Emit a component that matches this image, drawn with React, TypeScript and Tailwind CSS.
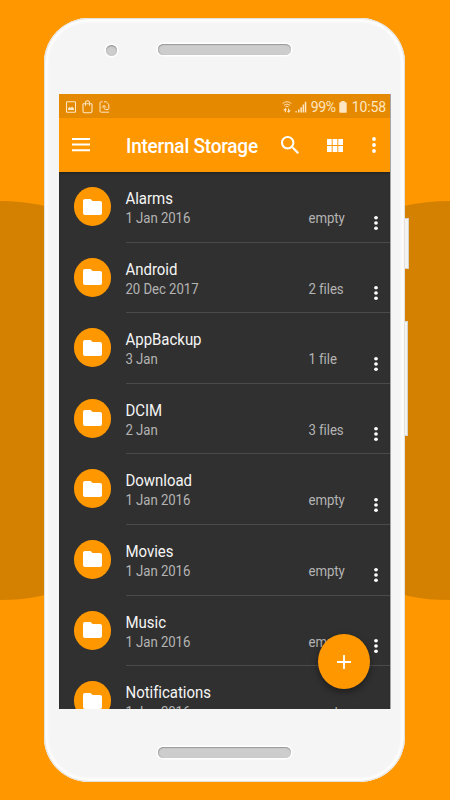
import React from 'react';

interface Folder {
  name: string;
  date: string;
  info: string;
}

const folders: Folder[] = [
  { name: 'Alarms', date: '1 Jan 2016', info: 'empty' },
  { name: 'Android', date: '20 Dec 2017', info: '2 files' },
  { name: 'AppBackup', date: '3 Jan', info: '1 file' },
  { name: 'DCIM', date: '2 Jan', info: '3 files' },
  { name: 'Download', date: '1 Jan 2016', info: 'empty' },
  { name: 'Movies', date: '1 Jan 2016', info: 'empty' },
  { name: 'Music', date: '1 Jan 2016', info: 'empty' },
  { name: 'Notifications', date: '1 Jan 2016', info: 'empty' },
];

const Dots: React.FC<{ className: string }> = ({ className }) => (
  <svg viewBox="0 0 4 16" className={className} fill="#fff" preserveAspectRatio="none">
    <circle cx="2" cy="2" r="1.9" />
    <circle cx="2" cy="8" r="1.9" />
    <circle cx="2" cy="14" r="1.9" />
  </svg>
);

const StatusBar = () => (
  <div className="flex h-[24px] shrink-0 items-center bg-[#e58900] pt-px pl-[7px] pr-1 text-[#ffe6c2]">
    <svg width="10" height="12" viewBox="0 0 10 12" fill="none" stroke="currentColor">
      <rect x="0.5" y="0.8" width="9" height="10.4" rx="0.6" strokeWidth="1.1" />
      <path d="M2 9V7.4l1.6-1.7 1.2 1.4L6 5.6 8 7.6V9z" fill="currentColor" stroke="none" />
    </svg>
    <svg width="11" height="14" viewBox="0 0 11 14" className="ml-1.5" fill="none" stroke="currentColor" strokeWidth="1.1">
      <path d="M3 3.8H1M4.2 3.8h2.6M8 3.8h2M1 3.8v7.4q0 1.6 1.6 1.6h5.8q1.6 0 1.6-1.6V3.8" />
      <path d="M3.5 5.8V2.8a2 2 0 0 1 4 0v3" />
    </svg>
    <svg width="11" height="12" viewBox="0 0 11 12" className="ml-1.5" fill="none" stroke="currentColor" strokeWidth="1">
      <path d="M3.6.8H2.1Q1 .8 1 1.9v8.2q0 1.1 1.1 1.1H10M5 .8h2.2l2.6 2.6v5" />
      <path d="M2.9 6.6l2.1-2.3 2 2.3M5 4.7v2.1q0 1.7 1.7 1.7h2.6" />
    </svg>
    <div className="flex-1" />
    <svg width="10" height="13" viewBox="0 0 10 13" fill="none" stroke="currentColor" strokeWidth="0.9">
      <path d="M.6 3.6q4.4-3.8 8.8 0M2 5.3q3-2.5 6 0M3.5 6.8q1.5-1.1 3 0" />
      <path d="M3.4 12.2V8.8M1.8 10.4l1.6-1.6 1 1M6.6 8.4V12M5.6 11l1 1 1.7-1.7" strokeWidth="1.1" />
    </svg>
    <svg width="12" height="12" viewBox="0 0 12 12" className="ml-[3px]" fill="currentColor">
      <path d="M.5 10h1.2v1.4H.5zM3 8.6h1.5v2.8H3zM5.4 6.2h1.5v5.2H5.4zM7.6 3.6h1.5v7.8H7.6zM9.8.8h1.5v10.6H9.8z" />
    </svg>
    <span className="ml-1 w-[27px] whitespace-nowrap text-[14px] leading-4 tracking-[-0.3px]">99%</span>
    <svg width="8" height="12" viewBox="0 0 8 12" className="ml-px" fill="currentColor">
      <path d="M2.3 0h3.4v1.3H7q.7 0 .7.7v9q0 .7-.7.7H1q-.7 0-.7-.7V2q0-.7.7-.7h1.3z" />
    </svg>
    <span className="ml-[5px] whitespace-nowrap text-[14px] leading-4 tracking-[-0.1px]">10:58</span>
  </div>
);

const Toolbar = () => (
  <div className="flex h-[54px] shrink-0 items-center bg-[#ff9800] pl-[13px] pr-[14px]">
    <svg width="18" height="14" viewBox="0 0 18 14" fill="#fff">
      <path d="M0 0h18v2H0zM0 5.6h18v2H0zM0 11.2h18v2H0z" />
    </svg>
    <h1 className="ml-[36px] w-[133px] scale-y-[1.06] whitespace-nowrap pt-[3px] text-[19px] font-medium leading-6 tracking-[-0.23px] text-white">
      Internal Storage
    </h1>
    <svg width="18" height="18" viewBox="3 3 17.49 17.49" className="ml-[21.5px]" fill="#fff">
      <path d="M15.5 14h-.79l-.28-.27C15.41 12.59 16 11.11 16 9.5 16 5.91 13.09 3 9.5 3S3 5.91 3 9.5 5.91 16 9.5 16c1.61 0 3.09-.59 4.23-1.57l.27.28v.79l5 4.99L20.49 19l-4.99-5zm-6 0C7.01 14 5 11.99 5 9.5S7.01 5 9.5 5 14 7.01 14 9.5 11.99 14 9.5 14z" />
    </svg>
    <svg width="16" height="13" viewBox="4 5 17 13" className="ml-[28.5px]" fill="#fff" preserveAspectRatio="none">
      <path d="M4 11h5V5H4v6zm0 7h5v-6H4v6zm6 0h5v-6h-5v6zm6 0h5v-6h-5v6zm-6-7h5V5h-5v6zm6-6v6h5V5h-5z" />
    </svg>
    <Dots className="ml-auto h-4 w-1" />
  </div>
);

const FolderRow: React.FC<{ folder: Folder }> = ({ folder }) => (
  <div className="flex h-[70.6px] shrink-0 pl-[14.5px]">
    <div className="mt-[15px] flex h-[39px] w-[37.5px] shrink-0 items-center justify-center rounded-[50%] bg-[#ff9800]">
      <svg width="19" height="16" viewBox="2 4 20 16" fill="#fff" preserveAspectRatio="none">
        <path d="M10 4H4c-1.1 0-1.99.9-1.99 2L2 18c0 1.1.9 2 2 2h16c1.1 0 2-.9 2-2V8c0-1.1-.9-2-2-2h-8l-2-2z" />
      </svg>
    </div>
    <div className="ml-[14.5px] flex flex-1 border-b border-[#4b4b4b]">
      <div className="w-[183px] whitespace-nowrap pt-[17px]">
        <div className="scale-y-[1.07] text-[15px] leading-5 tracking-[-0.03px] text-[#f5f5f5]">{folder.name}</div>
        <div className="scale-y-[1.06] text-[13.2px] leading-[19px] tracking-[-0.05px] text-[#b4b4b4]">{folder.date}</div>
      </div>
      <div className="w-[65px] whitespace-nowrap pt-[37px]">
        <div className="scale-y-[1.06] text-[13.2px] leading-[19px] tracking-[-0.05px] text-[#b4b4b4]">{folder.info}</div>
      </div>
      <Dots className="mt-[43.5px] h-[14px] w-1" />
    </div>
  </div>
);

const SpeakerSlot = () => (
  <div className="mx-auto h-[11.5px] w-[133px] rounded-full bg-[#cdcdcd] shadow-[inset_0_1px_1px_#999,inset_1px_0_1px_#b0b0b0,0_0_0_1.5px_#fff]" />
);

export default function App() {
  return (
    <div className="relative h-[800px] w-[450px] overflow-hidden bg-[#ff9800] font-['Roboto','Liberation_Sans',sans-serif]">
      {/* Background discs */}
      <div className="absolute -left-[200px] top-[200.5px] h-[399px] w-[400px] rounded-full bg-[#d48000]" />
      <div className="absolute left-[249px] top-[200.5px] h-[399px] w-[400px] rounded-full bg-[#d48000]" />

      {/* Side buttons */}
      <div className="absolute left-[403px] top-[218px] h-[51px] w-[5.5px] border border-l-0 border-[#d9d4cb] bg-[#f3f3f3]" />
      <div className="absolute left-[403px] top-[321px] h-[115px] w-[4.5px] border border-l-0 border-[#d9d4cb] bg-[#f3f3f3]" />

      <div className="relative ml-[44px] mt-[17.5px] flex h-[764.5px] w-[361px] flex-col rounded-[45px] bg-[#f5f5f5] shadow-[inset_0_0_1px_1px_#e3dfd8,inset_0_0_2px_4px_#fdfdfd]">
        {/* Front camera and earpiece */}
        <div className="relative flex h-[76.5px] shrink-0 pt-[26px]">
          <div className="absolute left-[62px] top-[27px] h-[11px] w-[11px] rounded-full bg-[#cdcdcd] shadow-[inset_0_1px_1.5px_#8f8f8f,0_0_0_1.5px_#fff]" />
          <SpeakerSlot />
        </div>

        <div className="relative ml-[15px] flex h-[615px] w-[332px] shrink-0 flex-col overflow-hidden border-r border-[#a5a5a5] bg-[#303030]">
          <StatusBar />
          <Toolbar />
          <div className="flex flex-1 flex-col overflow-hidden shadow-[inset_0_2px_3px_-1px_rgba(0,0,0,0.35)]">
            {folders.map((f) => (
              <FolderRow key={f.name} folder={f} />
            ))}
          </div>

          {/* Add button */}
          <button className="absolute left-[259px] top-[540px] flex h-[55px] w-[52px] items-center justify-center rounded-[50%] bg-[#ff9800] shadow-[0_3px_7px_rgba(0,0,0,0.4)]">
            <svg width="14" height="14" viewBox="0 0 14 14" fill="#fff">
              <path d="M6.1 0h1.8v6.1H14v1.8H7.9V14H6.1V7.9H0V6.1h6.1z" />
            </svg>
          </button>
        </div>

        <div className="flex pt-[37.5px]">
          <SpeakerSlot />
        </div>
      </div>
    </div>
  );
}
